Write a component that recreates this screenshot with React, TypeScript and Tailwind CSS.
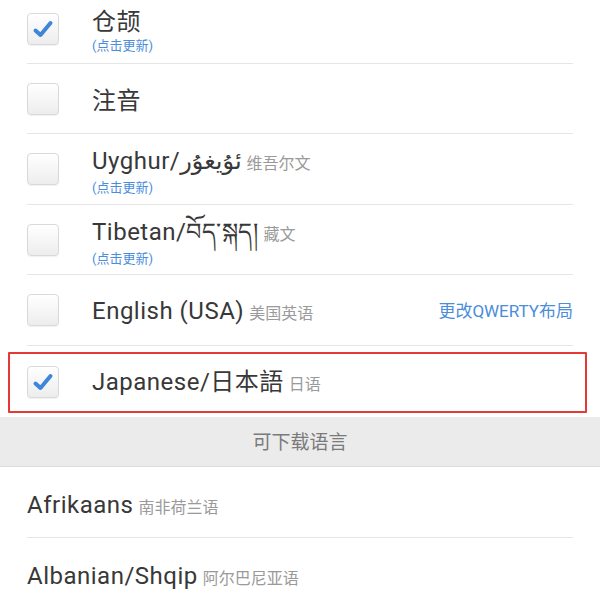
import React from "react";

const FONT = 'Roboto, "Noto Sans CJK SC", "DejaVu Sans", sans-serif';

function Check({ checked }: { checked: boolean }) {
  return (
    <div className="w-[32px] h-[32px] shrink-0 rounded-[4px] border border-[#d9d9d9] bg-gradient-to-b from-[#ffffff] to-[#ededed] shadow-[0_1px_1px_rgba(0,0,0,0.06)] flex items-center justify-center">
      {checked && (
        <svg width="22" height="22" viewBox="0 0 22 22">
          <path d="M3.5 12.5 L8.5 17 L18.5 5" fill="none" stroke="#3d86d8" strokeWidth="4" strokeLinecap="round" strokeLinejoin="round" />
        </svg>
      )}
    </div>
  );
}

type Row = {
  label: string;
  sub?: string;
  update?: boolean;
  checked?: boolean;
  action?: string;
  boxed?: boolean;
  divider?: boolean;
  h: string;
};

const rows: Row[] = [
  { label: "仓颉", update: true, checked: true, divider: true, h: "h-[70px]" },
  { label: "注音", divider: true, h: "h-[70px]" },
  { label: "Uyghur/ئۇيغۇر", sub: "维吾尔文", update: true, divider: true, h: "h-[71px]" },
  { label: "Tibetan/བོད་སྐད།", sub: "藏文", update: true, divider: true, h: "h-[70px]" },
  { label: "English (USA)", sub: "美国英语", action: "更改QWERTY布局", divider: true, h: "h-[71px]" },
  { label: "Japanese/日本語", sub: "日语", checked: true, boxed: true, h: "h-[71px]" },
];

export default function App() {
  return (
    <div className="w-[600px] h-[600px] overflow-hidden bg-white" style={{ fontFamily: FONT }}>
      <div className="mt-[-6px]">
        {rows.map((r, i) => (
          <div key={i} className="relative px-[27px]">
            <div className={`${r.h} flex items-center ${r.divider ? "border-b border-[#e6e6e6]" : ""}`}>
              <Check checked={!!r.checked} />
              <div className={`ml-[33px] flex-1 flex flex-col ${r.update ? "pt-[6px]" : "pt-[4px]"}`}>
                <div className="flex items-baseline leading-[28px]">
                  <span className="text-[24px] tracking-[0.5px] text-[#383838]">{r.label}</span>
                  {r.sub && <span className="ml-[5px] text-[16px] text-[#9a9a9a]">{r.sub}</span>}
                </div>
                {r.update && (
                  <span className="text-[13px] leading-[18px] mt-[1px] text-[#4a8ddb]">(点击更新)</span>
                )}
              </div>
              {r.action && <span className="text-[17px] text-[#4a8ddb] pt-[4px]">{r.action}</span>}
            </div>
            {r.boxed && (
              <div className="absolute left-[8px] right-[13px] top-[6px] bottom-[4px] border-2 border-[#e53935] rounded-[1px] pointer-events-none" />
            )}
          </div>
        ))}
      </div>
      <div className="h-[50px] bg-[#ebebeb] border-b border-[#dcdcdc] flex items-center justify-center pt-[3px]">
        <span className="text-[19px] text-[#7a7a7a]">可下载语言</span>
      </div>
      <div className="px-[27px]">
        <div className="h-[71px] flex items-baseline pt-[20px] border-b border-[#e6e6e6]">
          <span className="text-[24px] tracking-[0.5px] text-[#383838]">Afrikaans</span>
          <span className="ml-[5px] text-[16px] text-[#9a9a9a]">南非荷兰语</span>
        </div>
        <div className="h-[71px] flex items-baseline pt-[20px]">
          <span className="text-[24px] tracking-[0.5px] text-[#383838]">Albanian/Shqip</span>
          <span className="ml-[5px] text-[16px] text-[#9a9a9a]">阿尔巴尼亚语</span>
        </div>
      </div>
    </div>
  );
}
